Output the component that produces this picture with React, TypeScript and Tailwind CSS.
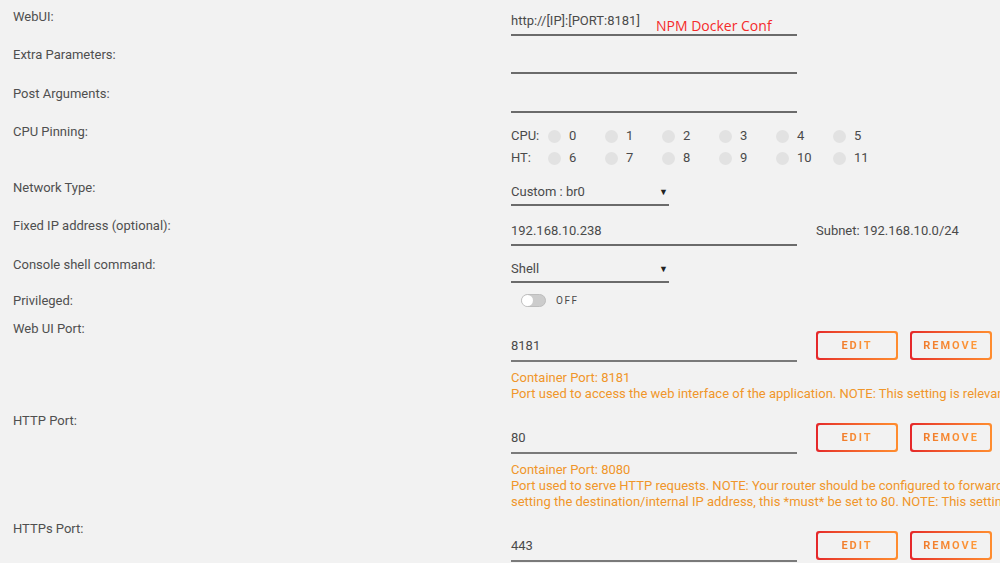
import type { ReactNode } from 'react';

const font = { fontFamily: 'Roboto, "Liberation Sans", Arial, sans-serif' };

const Label = ({ children, className = '' }: { children: ReactNode; className?: string }) => (
    <div className={`w-[511px] shrink-0 pl-[13px] text-[13px] leading-[18px] text-[#4f4f4f] ${className}`}>
        {children}
    </div>
);

const TextInput = ({ value, className = '' }: { value?: string; className?: string }) => (
    <div className={`flex h-[25px] w-[286px] items-start border-b-2 border-[#6b6b6b] pt-[1px] text-[13px] leading-[18px] text-[#4a4a4a] ${className}`}>
        {value}
    </div>
);

const Select = ({ value }: { value: string }) => (
    <div className="mt-[12px] flex h-[24px] w-[158px] items-start justify-between border-b-2 border-[#6b6b6b] pt-[1px] text-[13px] leading-[18px] text-[#4a4a4a]">
        <span>{value}</span>
        <span className="mr-[1px] text-[9px] leading-[18px] text-[#222]">▼</span>
    </div>
);

const GradientButton = ({ label, className = '' }: { label: string; className?: string }) => (
    <div className={`h-[29px] w-[82px] rounded-[3px] bg-gradient-to-r from-[#e5262a] to-[#ff8d2f] p-[2px] ${className}`}>
        <div className="flex h-full w-full items-center justify-center rounded-[2px] bg-[#f2f2f2]">
            <span className="bg-gradient-to-r from-[#f07a2a] to-[#ff9a3a] bg-clip-text pt-[1px] text-[11px] font-bold tracking-[2px] text-transparent">
                {label}
            </span>
        </div>
    </div>
);

const CpuRow = ({ title, cores }: { title: string; cores: number[] }) => (
    <div className="flex h-[22px] items-center text-[13px] text-[#4a4a4a]">
        <span className="w-[37px]">{title}</span>
        {cores.map((core) => (
            <div key={core} className="flex w-[57px] items-center">
                <span className="size-[13px] rounded-full bg-[#e2e2e2]" />
                <span className="ml-[8px]">{core}</span>
            </div>
        ))}
    </div>
);

const PortRow = ({
    label,
    value,
    container,
    notes,
    height,
}: {
    label: string;
    value: string;
    container?: string;
    notes?: string[];
    height: string;
}) => (
    <div className={`flex ${height}`}>
        <Label className="pt-[2px]">{label}</Label>
        <div className="flex flex-col">
            <div className="flex items-start">
                <div className="mt-[14px] flex h-[30px] w-[286px] items-center border-b-2 border-[#7a7a7a] text-[13px] text-[#4a4a4a]">
                    {value}
                </div>
                <GradientButton label="EDIT" className="ml-[19px] mt-[13px]" />
                <GradientButton label="REMOVE" className="ml-[12px] mt-[13px]" />
            </div>
            {container && (
                <div className="mt-[8px] whitespace-nowrap text-[13px] leading-[16px] text-[#f0962a]">
                    <div>Container Port: {container}</div>
                    {notes?.map((line) => (
                        <div key={line}>{line}</div>
                    ))}
                </div>
            )}
        </div>
    </div>
);

export default function App() {
    return (
        <div style={font} className="h-[563px] w-[1000px] overflow-hidden bg-[#f2f2f2]">
            <div className="flex h-[38px]">
                <Label className="pt-[8px]">WebUI:</Label>
                <div className="relative">
                    <TextInput value="http://[IP]:[PORT:8181]" className="mt-[11px]" />
                    <span
                        style={{ fontFamily: '"Open Sans", sans-serif' }}
                        className="absolute left-[145px] top-[16px] text-[14px] leading-[20px] text-[#f52a2a]"
                    >
                        NPM Docker Conf
                    </span>
                </div>
            </div>
            <div className="flex h-[39px]">
                <Label className="pt-[8px]">Extra Parameters:</Label>
                <TextInput className="mt-[11px]" />
            </div>
            <div className="flex h-[38px]">
                <Label className="pt-[8px]">Post Arguments:</Label>
                <TextInput className="mt-[11px]" />
            </div>
            <div className="flex h-[55px]">
                <Label className="pt-[8px]">CPU Pinning:</Label>
                <div className="pt-[10px]">
                    <CpuRow title="CPU:" cores={[0, 1, 2, 3, 4, 5]} />
                    <CpuRow title="HT:" cores={[6, 7, 8, 9, 10, 11]} />
                </div>
            </div>
            <div className="flex h-[38px]">
                <Label className="pt-[9px]">Network Type:</Label>
                <Select value="Custom : br0" />
            </div>
            <div className="flex h-[39px]">
                <Label className="pt-[9px]">Fixed IP address (optional):</Label>
                <TextInput value="192.168.10.238" className="mt-[13px]" />
                <span className="ml-[19px] mt-[14px] text-[13px] leading-[18px] text-[#4a4a4a]">
                    Subnet: 192.168.10.0/24
                </span>
            </div>
            <div className="flex h-[38px]">
                <Label className="pt-[9px]">Console shell command:</Label>
                <Select value="Shell" />
            </div>
            <div className="flex h-[33px]">
                <Label className="pt-[7px]">Privileged:</Label>
                <div className="ml-[10px] mt-[9px] flex h-[13px] items-center">
                    <div className="flex h-[13px] w-[25px] items-center rounded-full border border-[#bdbdbd] bg-[#cccccc]">
                        <span className="size-[11px] rounded-full bg-white" />
                    </div>
                    <span className="ml-[10px] text-[10px] tracking-[1.5px] text-[#4a4a4a]">OFF</span>
                </div>
            </div>
            <PortRow
                label="Web UI Port:"
                value="8181"
                container="8181"
                height="h-[92px]"
                notes={[
                    'Port used to access the web interface of the application. NOTE: This setting is relevant only when the network type is bridge.',
                ]}
            />
            <PortRow
                label="HTTP Port:"
                value="80"
                container="8080"
                height="h-[108px]"
                notes={[
                    'Port used to serve HTTP requests. NOTE: Your router should be configured to forward port 80 to this port. If your router needs',
                    'setting the destination/internal IP address, this *must* be set to 80. NOTE: This setting is relevant only when the network type',
                ]}
            />
            <PortRow label="HTTPs Port:" value="443" height="h-[60px]" />
        </div>
    );
}
